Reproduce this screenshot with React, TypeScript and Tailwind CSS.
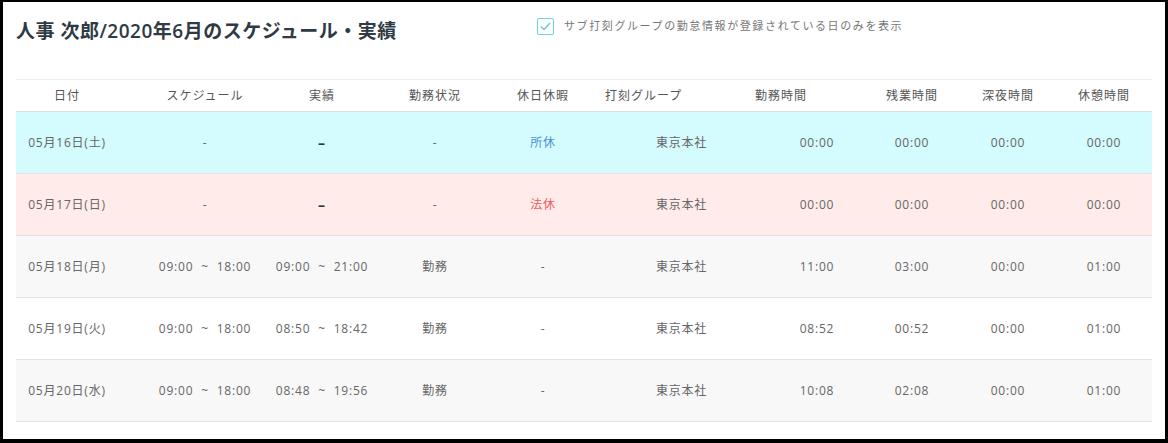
import React from "react";

const cols = "grid grid-cols-[120px_128px_116px_110px_123px_137px_114px_96px_96px_96px]";

type Row = { d: string; s: string; a: string; st: string; h: string; hc: string; w: string; o: string; n: string; b: string; bg: string };
const rows: Row[] = [
  { d: "05月16日(土)", s: "-", a: "–", st: "-", h: "所休", hc: "text-[#4a90d9]", w: "00:00", o: "00:00", n: "00:00", b: "00:00", bg: "bg-[#d4fbfd]" },
  { d: "05月17日(日)", s: "-", a: "–", st: "-", h: "法休", hc: "text-[#f05a5a]", w: "00:00", o: "00:00", n: "00:00", b: "00:00", bg: "bg-[#ffecea]" },
  { d: "05月18日(月)", s: "09:00 ~ 18:00", a: "09:00 ~ 21:00", st: "勤務", h: "-", hc: "", w: "11:00", o: "03:00", n: "00:00", b: "01:00", bg: "bg-[#f8f8f8]" },
  { d: "05月19日(火)", s: "09:00 ~ 18:00", a: "08:50 ~ 18:42", st: "勤務", h: "-", hc: "", w: "08:52", o: "00:52", n: "00:00", b: "01:00", bg: "bg-white" },
  { d: "05月20日(水)", s: "09:00 ~ 18:00", a: "08:48 ~ 19:56", st: "勤務", h: "-", hc: "", w: "10:08", o: "02:08", n: "00:00", b: "01:00", bg: "bg-[#f8f8f8]" },
];

const c = "flex items-center justify-center whitespace-nowrap";

export default function App() {
  return (
    <div
      className="w-[1168px] h-[443px] bg-white border-black border-l-[3px] border-t-[2px] border-r-[3px] border-b-[4px] box-border"
      style={{ fontFamily: '"Open Sans", "Noto Sans CJK JP", sans-serif' }}
    >
      <div className="flex items-center h-[58px] pl-[13px]">
        <h1 className="text-[19px] text-[#2f3a44] font-semibold tracking-[0.5px] w-[521px] mt-[0px]">人事 次郎/2020年6月のスケジュール・実績</h1>
        <div className="flex items-center self-start mt-[16px] gap-[10px]">
          <div className="w-[17px] h-[17px] border border-[#6bd3e3] rounded-[2px] flex items-center justify-center">
            <svg width="11" height="9" viewBox="0 0 11 9"><path d="M1 4.5 L4 7.5 L10 1" stroke="#5cc8dc" strokeWidth="1.4" fill="none" /></svg>
          </div>
          <span className="text-[11px] text-[#777] tracking-[1.6px]">サブ打刻グループの勤怠情報が登録されている日のみを表示</span>
        </div>
      </div>
      <div className="mx-[13px] mt-[19px]">
        <div className={`${cols} h-[33px] border-t border-[#eeeeee] border-b border-b-[#dddddd] text-[12px] text-[#555] tracking-[1px]`}>
          <div className={`${c} pr-[18px]`}>日付</div>
          <div className={`${c} pl-[10px]`}>スケジュール</div>
          <div className={c}>実績</div>
          <div className={c}>勤務状況</div>
          <div className={`${c} pr-[17px]`}>休日休暇</div>
          <div className="flex items-center whitespace-nowrap ml-[-8px]">打刻グループ</div>
          <div className={`${c} pr-[52px]`}>勤務時間</div>
          <div className={c}>残業時間</div>
          <div className={c}>深夜時間</div>
          <div className={c}>休憩時間</div>
        </div>
        {rows.map((r) => (
          <div key={r.d} className={`${cols} h-[62px] border-b border-[#e3e3e3] text-[12px] text-[#666] tracking-[0.8px] ${r.bg}`}>
            <div className={`${c} pr-[18px]`}>{r.d}</div>
            <div className={`${c} pl-[10px]`}>{r.s.replace("~", "\u00a0~\u00a0")}</div>
            <div className={`${c} ${r.a === "–" ? "text-[#333] font-bold text-[14px]" : ""}`}>{r.a.replace("~", "\u00a0~\u00a0")}</div>
            <div className={c}>{r.st}</div>
            <div className={`${c} pr-[17px] ${r.hc}`}>{r.h}</div>
            <div className={c}>東京本社</div>
            <div className={`${c} pl-[20px]`}>{r.w}</div>
            <div className={c}>{r.o}</div>
            <div className={c}>{r.n}</div>
            <div className={c}>{r.b}</div>
          </div>
        ))}
      </div>
    </div>
  );
}
